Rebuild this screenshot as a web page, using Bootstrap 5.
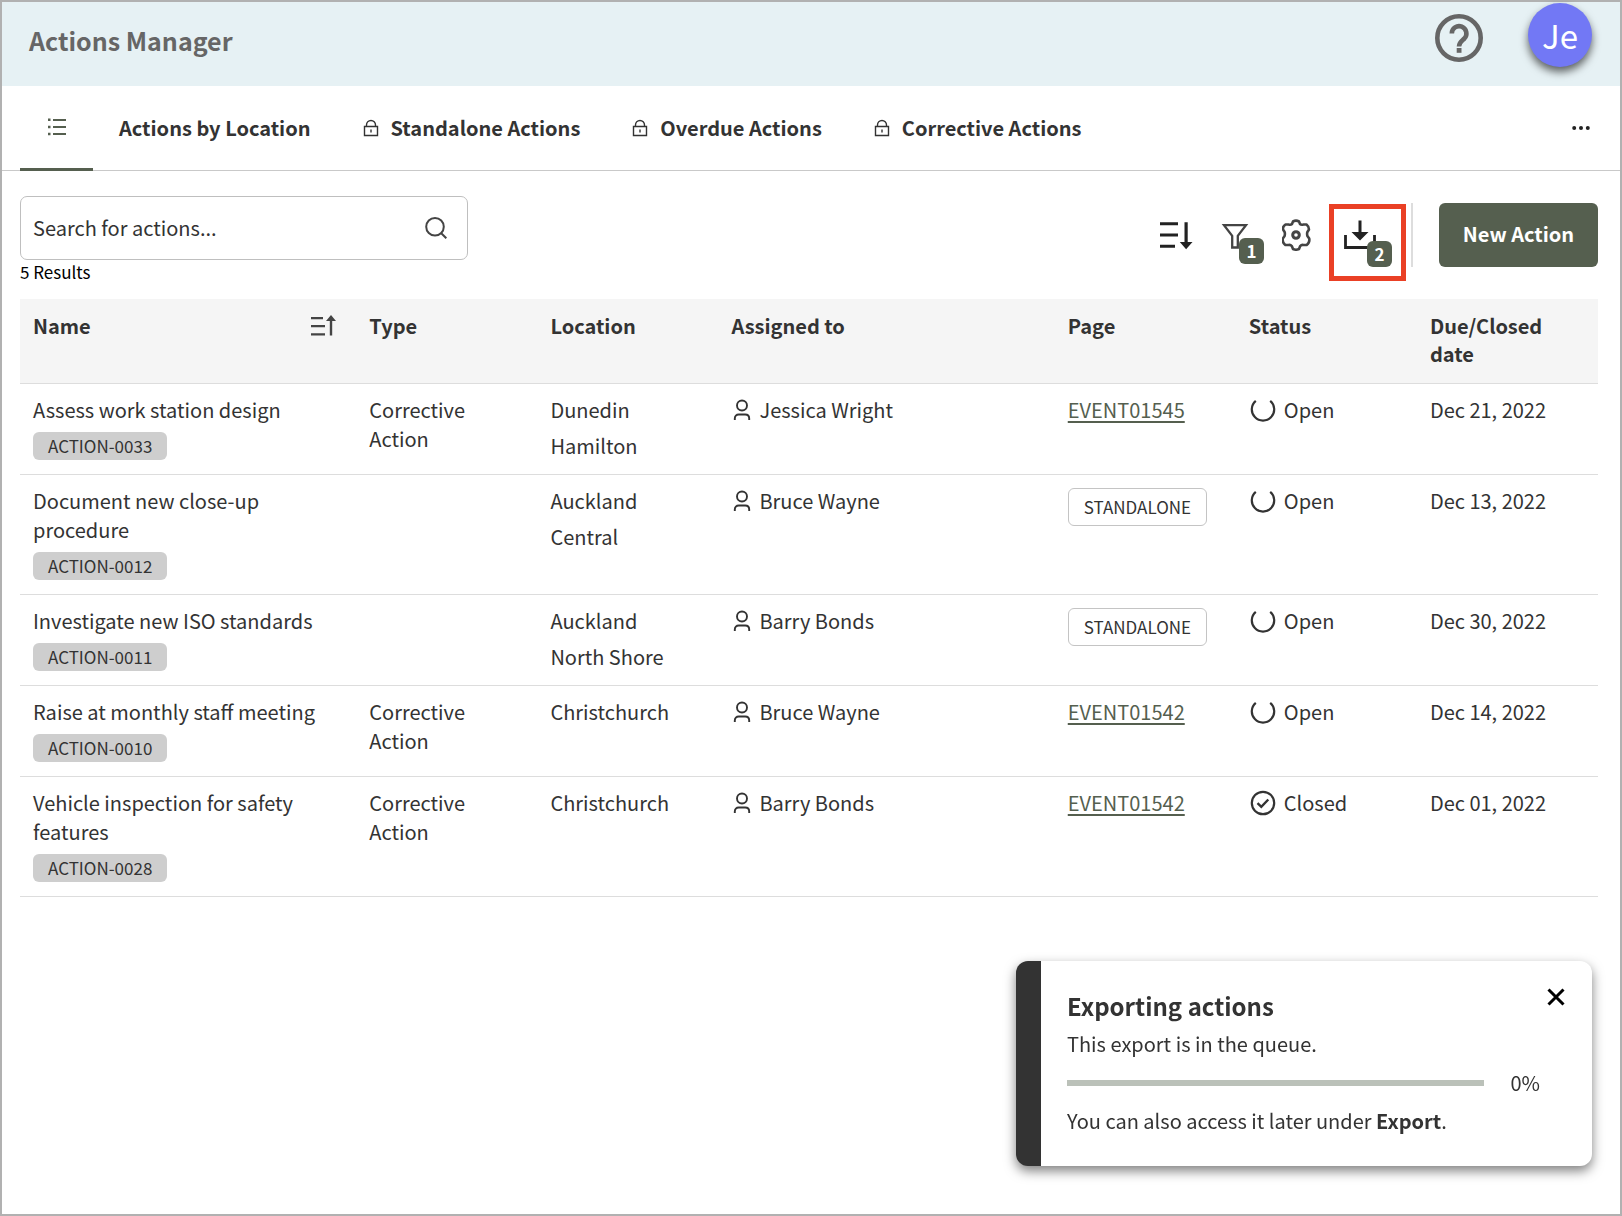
<!DOCTYPE html>
<html lang="en">
<head>
<meta charset="utf-8">
<meta name="viewport" content="width=device-width, initial-scale=1">
<title>Actions Manager</title>
<link rel="stylesheet" href="https://cdn.jsdelivr.net/npm/bootstrap@5.3.0/dist/css/bootstrap.min.css">
<script src="https://cdn.jsdelivr.net/npm/bootstrap@5.3.0/dist/js/bootstrap.bundle.min.js" defer></script>
<style>
  :root { --ink: #333; --moss: #555f4f; --line: #c9c9c9; }
  body { font-family: "Noto Sans CJK SC", "Noto Sans", sans-serif; font-size: 20px; line-height: 29px; color: var(--ink); background: #fff; }
  svg { display: block; flex: none; }
  .page-frame { min-height: 100vh; border: 2px solid #b1b1b1; }
  .top-bar { height: 84px; padding: 0 28px 0 27px; background: #e6f1f4; }
  .top-bar h1 { font-size: 25px; line-height: 32px; font-weight: 600; color: #666; margin: 22px 0; }
  .top-tools { gap: 45px; }
  .help-btn { margin-top: 12px; }
  .bare-btn { border: 0; padding: 0; background: none; color: var(--ink); }
  .avatar { width: 64px; height: 64px; margin-top: 1px; border-radius: 50%; border: 0; padding: 0; background: #7278f5; color: #fff; font-size: 33px; line-height: 60px; font-weight: 400; box-shadow: 0 5px 8px rgba(0,0,0,.6); }
  .view-tabs { height: 85px; padding: 0 30px 0 18px; border-bottom: 1px solid var(--line); gap: 26px; }
  .view-tabs .nav-link { height: 85px; padding: 0 0 2px; gap: 12px; display: flex; align-items: center; color: var(--ink); font-weight: 600; white-space: nowrap; }
  .view-tabs .nav-link.active { width: 73px; padding: 0; justify-content: center; border-bottom: 3px solid var(--moss); color: var(--moss); }
  .view-list { gap: 52px; }
  .main-area { padding: 25px 22px 0 18px; }
  .search-box { width: 448px; height: 64px; border: 1px solid #bfbfbf; border-radius: 7px; padding: 0 20px 0 12px; }
  .search-box input { border: 0; outline: 0; background: none; min-width: 0; height: 44px; color: var(--ink); padding: 0 0 2px; }
  .search-box input::placeholder { color: var(--ink); opacity: 1; }
  .result-count { font-size: 17px; line-height: 24px; color: #000; }
  .toolbar { padding-top: 7px; height: 71px; }
  .tool-icons { gap: 30px; padding-right: 35px; }
  .tool-icons button { width: 32px; height: 32px; }
  .count-tag { position: absolute; width: 25px; height: 26px; border-radius: 6px; background: var(--moss); color: #fff; font-size: 17px; font-weight: 700; line-height: 25px; text-align: center; left: 19px; top: 19px; }
  .export-tool .count-tag { left: 23px; top: 22px; }
  .callout-frame { position: absolute; left: -15px; top: -15px; width: 77px; height: 77px; border: 5px solid #ea4025; pointer-events: none; }
  .tool-rule { width: 2px; height: 64px; background: #ddd; margin-right: 26px; }
  .new-btn { height: 64px; min-width: 159px; background: var(--moss); border-radius: 6px; color: #fff; font-weight: 700; font-size: 20px; padding: 0 16px 2px; }
  .new-btn:hover { background: #454d40; color: #fff; }
  .action-table { table-layout: fixed; margin: 15px 0 0; color: var(--ink); --bs-table-color: #333; }
  .action-table th, .action-table td { padding: 11px 12px 14px 13px; border-bottom: 1px solid #ddd; vertical-align: top; }
  .action-table thead th { background: #f5f5f5; font-weight: 600; line-height: 28px; padding-top: 13px; padding-bottom: 15px; }
  .col-wide { width: 21.312%; }
  .col-slim { width: 11.475%; }
  .code-tag { display: block; width: fit-content; margin-top: 8px; padding: 0 15px; border-radius: 6px; background: #cecece; font-size: 17px; line-height: 28px; }
  .place-list li + li { margin-top: 7px; }
  .person-cell { gap: 8px; padding-left: 2px; }
  .state-cell { gap: 8px; padding-left: 1px; }
  .solo-tag { display: block; width: fit-content; margin-top: 2px; border: 1px solid #c4c4c4; border-radius: 6px; padding: 0 15px; font-size: 17px; line-height: 36px; }
  .action-table a { color: var(--moss); text-decoration-thickness: 2px; text-underline-offset: 3px; }
  .export-note { position: fixed; right: 30px; bottom: 50px; width: 576px; min-height: 205px; background: #fff; border-left: 25px solid #333; border-radius: 12px; box-shadow: 0 5px 12px rgba(0,0,0,.5); padding: 27px 27px 29px 26px; }
  .export-note h2 { font-size: 24px; line-height: 36px; font-weight: 700; margin: 0 0 5px; }
  .export-note p { margin: 0; }
  .note-row { gap: 26px; margin: 10px 0 9px; padding-right: 25px; }
  .export-progress { height: 6px; border-radius: 0; background: #bbc1b9; }
  .export-progress .progress-bar { background: var(--moss); }
</style>
</head>
<body>
<svg width="0" height="0" class="position-absolute" aria-hidden="true">
  <symbol id="i-lock" viewBox="0 0 16 18"><path d="M1.500 7.500h13v9h-13zM3.500 7.500V6a4.500 4.500 0 0 1 9 0v1.500M8 10.500v3" fill="none" stroke="currentColor" stroke-width="1.400"/></symbol>
  <symbol id="i-person" viewBox="0 0 18 22"><g fill="none" stroke="currentColor" stroke-width="1.900"><circle cx="9" cy="6.500" r="5"/><path d="M1.800 21v-1.500c0-2.500 1.500-4 4-4h6.400c2.500 0 4 1.500 4 4V21"/></g></symbol>
  <symbol id="i-open" viewBox="0 0 26 26"><path d="M5.800 3.800A11.200 11.200 0 1 0 20.200 3.800" fill="none" stroke="currentColor" stroke-width="2.200"/></symbol>
  <symbol id="i-closed" viewBox="0 0 26 26"><g fill="none" stroke="currentColor" stroke-width="2.200"><circle cx="13" cy="13" r="11.200"/><path d="M7.500 13.200l3.800 3.600 7-7.300" stroke-width="2.400"/></g></symbol>
</svg>
<div class="page-frame">
  <header class="top-bar d-flex justify-content-between align-items-start">
    <h1>Actions Manager</h1>
    <div class="top-tools d-flex align-items-start">
      <button class="bare-btn help-btn" type="button" aria-label="Help">
        <svg width="48" height="48" viewBox="0 0 48 48"><circle cx="24" cy="24" r="21.700" fill="none" stroke="#666" stroke-width="4.600"/><path d="M16.800 19.500a7.300 7.300 0 1 1 12.600 5c-2.400 2.400-5.400 3.700-5.400 8" fill="none" stroke="#666" stroke-width="4.600"/><path d="M21.700 34h4.800v4.800h-4.800z" fill="#666"/></svg>
      </button>
      <button class="avatar" type="button" aria-label="Account">Je</button>
    </div>
  </header>

  <nav class="view-tabs d-flex align-items-start" aria-label="Views">
    <a class="nav-link active" href="#" aria-label="All actions" aria-current="page">
      <svg width="18" height="18" viewBox="0 0 18 18" fill="currentColor"><path d="M5 1h13v2H5zM5 8h13v2H5zM5 15h13v2H5zM0 .500h2.500V3H0zM0 7.700h2.500v2.500H0zM0 14.800h2.500v2.500H0z"/></svg>
    </a>
    <div class="view-list d-flex flex-grow-1">
      <a class="nav-link" href="#">Actions by Location</a>
      <a class="nav-link" href="#"><svg width="16" height="18"><use href="#i-lock"/></svg>Standalone Actions</a>
      <a class="nav-link" href="#"><svg width="16" height="18"><use href="#i-lock"/></svg>Overdue Actions</a>
      <a class="nav-link" href="#"><svg width="16" height="18"><use href="#i-lock"/></svg>Corrective Actions</a>
    </div>
    <button class="bare-btn align-self-center" type="button" aria-label="More views">
      <svg width="18" height="6" viewBox="0 0 18 6" fill="#222"><circle cx="2.200" cy="3" r="2"/><circle cx="9" cy="3" r="2"/><circle cx="15.800" cy="3" r="2"/></svg>
    </button>
  </nav>

  <main class="main-area">
    <div class="d-flex justify-content-between align-items-start">
      <div>
        <div class="search-box d-flex align-items-center">
          <input class="flex-grow-1" type="text" aria-label="Search for actions" placeholder="Search for actions...">
          <button class="bare-btn" type="button" aria-label="Search"><svg width="22" height="22" viewBox="0 0 22 22"><g fill="none" stroke="#444" stroke-width="2"><circle cx="10" cy="9.800" r="8.800"/><path d="M16 16l5.300 5.300"/></g></svg></button>
        </div>
        <div class="result-count">5 Results</div>
      </div>
      <div class="toolbar d-flex align-items-center">
        <div class="tool-icons d-flex">
          <button class="bare-btn" type="button" aria-label="Sort"><svg width="36" height="32" viewBox="0 0 36 32" fill="#222"><path d="M2 3.300h18v3H2zM2 14.500h18v3H2zM2 25.700h15v3H2zM26.500 3.300h3.200V23h4.800L28.100 30.300l-6.300-7.300h4.700z"/></svg></button>
          <button class="bare-btn position-relative" type="button" aria-label="Filter"><svg width="32" height="32" viewBox="0 0 32 32"><path d="M4 6.200h22l-8.200 10.600v11.700h-5.600V16.800z" fill="none" stroke="#444" stroke-width="2.300"/></svg><span class="count-tag">1</span></button>
          <button class="bare-btn" type="button" aria-label="Settings"><svg width="32" height="32" viewBox="0 0 32 32"><g fill="none" stroke="#444" stroke-width="2.600" stroke-linejoin="round"><path d="M11 2.500Q14 .800 17 2.500L18 5Q19.200 6.200 21.500 5.500L24.500 5.500Q27 7.500 27 10.500L25.400 13Q24.800 14.500 25.400 17L27.200 19.500Q28 23.500 24.700 26L21.500 26Q19.500 25.500 18.200 27L17 30Q14 31.400 11 30L9.800 27Q8.500 25.500 6.500 26L3.300 26Q0 23.500 .800 19.500L2.600 17Q3.200 14.500 2.600 13L1 10.500Q.500 7.500 3.500 5.500L6.500 5.500Q8.800 6.200 10 5Z"/><circle cx="14" cy="16" r="3.300" stroke-width="3"/></g></svg></button>
          <div class="export-tool position-relative d-flex">
            <button class="bare-btn" type="button" aria-label="Export"><svg width="32" height="32" viewBox="0 0 32 32"><path d="M1.500 16v12.500h29V16" fill="none" stroke="#222" stroke-width="2.800"/><path d="M14.500 1.500h3V13h7L16 21.500 7.500 13h7z" fill="#222"/></svg><span class="count-tag">2</span></button>
            <div class="callout-frame"></div>
          </div>
        </div>
        <div class="tool-rule"></div>
        <button class="btn new-btn" type="button">New Action</button>
      </div>
    </div>

    <table class="table action-table">
      <colgroup><col class="col-wide"><col class="col-slim"><col class="col-slim"><col class="col-wide"><col class="col-slim"><col class="col-slim"><col class="col-slim"></colgroup>
      <thead>
        <tr>
          <th scope="col"><div class="d-flex justify-content-between align-items-center pe-2">Name<button class="bare-btn" type="button" aria-label="Sort by name"><svg width="26" height="22" viewBox="0 0 26 22" fill="#444"><path d="M1 2h12v2.300H1zM1 10h14v2.300H1zM1 18.300h14v2.300H1zM19.800 20.600V6h-3.800l5-6 5 6h-3.800v14.600z"/></svg></button></div></th>
          <th scope="col">Type</th><th scope="col">Location</th><th scope="col">Assigned to</th><th scope="col">Page</th><th scope="col">Status</th><th scope="col">Due/Closed date</th>
        </tr>
      </thead>
      <tbody>
        <tr>
          <td>Assess work station design<span class="code-tag">ACTION-0033</span></td>
          <td>Corrective Action</td>
          <td><ul class="place-list list-unstyled mb-0"><li>Dunedin</li><li>Hamilton</li></ul></td>
          <td><div class="person-cell d-flex"><svg width="18" height="22" class="mt-1"><use href="#i-person"/></svg>Jessica Wright</div></td>
          <td><a href="#">EVENT01545</a></td>
          <td><div class="state-cell d-flex align-items-center"><svg width="26" height="26"><use href="#i-open"/></svg>Open</div></td>
          <td>Dec 21, 2022</td>
        </tr>
        <tr>
          <td>Document new close-up procedure<span class="code-tag">ACTION-0012</span></td>
          <td></td>
          <td><ul class="place-list list-unstyled mb-0"><li>Auckland</li><li>Central</li></ul></td>
          <td><div class="person-cell d-flex"><svg width="18" height="22" class="mt-1"><use href="#i-person"/></svg>Bruce Wayne</div></td>
          <td><span class="solo-tag">STANDALONE</span></td>
          <td><div class="state-cell d-flex align-items-center"><svg width="26" height="26"><use href="#i-open"/></svg>Open</div></td>
          <td>Dec 13, 2022</td>
        </tr>
        <tr>
          <td>Investigate new ISO standards<span class="code-tag">ACTION-0011</span></td>
          <td></td>
          <td><ul class="place-list list-unstyled mb-0"><li>Auckland</li><li>North Shore</li></ul></td>
          <td><div class="person-cell d-flex"><svg width="18" height="22" class="mt-1"><use href="#i-person"/></svg>Barry Bonds</div></td>
          <td><span class="solo-tag">STANDALONE</span></td>
          <td><div class="state-cell d-flex align-items-center"><svg width="26" height="26"><use href="#i-open"/></svg>Open</div></td>
          <td>Dec 30, 2022</td>
        </tr>
        <tr>
          <td>Raise at monthly staff meeting<span class="code-tag">ACTION-0010</span></td>
          <td>Corrective Action</td>
          <td>Christchurch</td>
          <td><div class="person-cell d-flex"><svg width="18" height="22" class="mt-1"><use href="#i-person"/></svg>Bruce Wayne</div></td>
          <td><a href="#">EVENT01542</a></td>
          <td><div class="state-cell d-flex align-items-center"><svg width="26" height="26"><use href="#i-open"/></svg>Open</div></td>
          <td>Dec 14, 2022</td>
        </tr>
        <tr>
          <td>Vehicle inspection for safety features<span class="code-tag">ACTION-0028</span></td>
          <td>Corrective Action</td>
          <td>Christchurch</td>
          <td><div class="person-cell d-flex"><svg width="18" height="22" class="mt-1"><use href="#i-person"/></svg>Barry Bonds</div></td>
          <td><a href="#">EVENT01542</a></td>
          <td><div class="state-cell d-flex align-items-center"><svg width="26" height="26"><use href="#i-closed"/></svg>Closed</div></td>
          <td>Dec 01, 2022</td>
        </tr>
      </tbody>
    </table>
  </main>
</div>

<section class="export-note" role="status" aria-label="Exporting actions">
  <div class="d-flex justify-content-between align-items-start">
    <h2>Exporting actions</h2>
    <button class="bare-btn" type="button" aria-label="Close"><svg width="18" height="18" viewBox="0 0 18 18"><path d="M1.500 1.500l15 15M16.500 1.500l-15 15" stroke="#000" stroke-width="3"/></svg></button>
  </div>
  <p>This export is in the queue.</p>
  <div class="note-row d-flex align-items-center">
    <div class="progress export-progress flex-grow-1" role="progressbar" aria-label="Export progress" aria-valuenow="0" aria-valuemin="0" aria-valuemax="100"><div class="progress-bar" style="width: 0%"></div></div>
    <span>0%</span>
  </div>
  <p>You can also access it later under <strong>Export</strong>.</p>
</section>
</body>
</html>
